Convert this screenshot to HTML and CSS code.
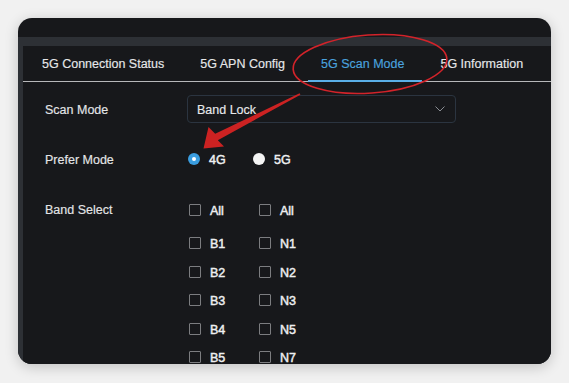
FILE: index.html
```html
<!DOCTYPE html>
<html lang="en">
<head>
<meta charset="utf-8">
<title>5G Scan Mode</title>
<link rel="stylesheet" href="styles.css">
</head>
<body>
<div class="card">
  <div class="frame">
    <div class="panel">
      <nav class="tabs">
        <div class="tab">5G Connection Status</div>
        <div class="tab">5G APN Config</div>
        <div class="tab active">5G Scan Mode</div>
        <div class="tab">5G Information</div>
      </nav>
      <div class="form">
        <div class="row row-select">
          <div class="label">Scan Mode</div>
          <div class="select">
            <span class="txt">Band Lock</span>
            <svg class="chev" width="10" height="6" viewBox="0 0 10 6"><path d="M0.5 0.5 L5 5 L9.5 0.5" fill="none" stroke="#8a8d93" stroke-width="1"/></svg>
          </div>
        </div>
        <div class="row row-radio">
          <div class="label">Prefer Mode</div>
          <div class="radios">
            <div class="opt"><span class="radio checked"></span><span class="opt-text">4G</span></div>
            <div class="opt"><span class="radio"></span><span class="opt-text">5G</span></div>
          </div>
        </div>
        <div class="row row-bands">
          <div class="label label-top">Band Select</div>
          <div class="bands">
            <div class="band-grid band-all">
              <div class="chk"><span class="box"></span><span class="opt-text">All</span></div>
              <div class="chk"><span class="box"></span><span class="opt-text">All</span></div>
            </div>
            <div class="band-grid band-list">
              <div class="chk"><span class="box"></span><span class="opt-text">B1</span></div>
              <div class="chk"><span class="box"></span><span class="opt-text">N1</span></div>
              <div class="chk"><span class="box"></span><span class="opt-text">B2</span></div>
              <div class="chk"><span class="box"></span><span class="opt-text">N2</span></div>
              <div class="chk"><span class="box"></span><span class="opt-text">B3</span></div>
              <div class="chk"><span class="box"></span><span class="opt-text">N3</span></div>
              <div class="chk"><span class="box"></span><span class="opt-text">B4</span></div>
              <div class="chk"><span class="box"></span><span class="opt-text">N5</span></div>
              <div class="chk"><span class="box"></span><span class="opt-text">B5</span></div>
              <div class="chk"><span class="box"></span><span class="opt-text">N7</span></div>
            </div>
          </div>
        </div>
      </div>
    </div>
  </div>
</div>
<svg class="annot" width="569" height="383" viewBox="0 0 569 383">
  <ellipse cx="370" cy="64" rx="77" ry="29" transform="rotate(-4 370 64)" fill="none" stroke="#d2232a" stroke-width="1.6"/>
  <polygon points="299.6,93.3 215.2,133.8 208.5,127 203.5,148.5 224,146.5 217.8,140.2 300.4,94.7" fill="#cc2222"/>
</svg>
</body>
</html>
```
FILE: styles.css
```css
* { box-sizing: border-box; }
html, body { margin: 0; }
body {
  width: 569px;
  height: 383px;
  background: #f1f1f1;
  padding: 18px;
  font-family: "Liberation Sans", Arial, sans-serif;
  font-size: 12.5px;
  color: #e6e7e9;
  position: relative;
  overflow: hidden;
}
.card {
  width: 533px;
  height: 346px;
  border-radius: 14px;
  overflow: hidden;
  background: #17181b;
  padding-top: 19px;
  box-shadow: 0 3px 14px rgba(0,0,0,0.2);
}
.frame {
  height: 100%;
  background: #2d3035;
  padding: 9px 0 0 5px;
}
.panel {
  height: 100%;
  background: #17181b;
  overflow: hidden;
}
.tabs {
  display: flex;
  height: 36px;
  padding-left: 1px;
  border-bottom: 1px solid #b7b8ba;
}
.tab {
  position: relative;
  display: flex;
  align-items: center;
  padding: 0 18px;
  white-space: nowrap;
  color: #e6e7e9;
  -webkit-text-stroke: 0.15px #e6e7e9;
}
.tab.active { color: #4aa2df; -webkit-text-stroke: 0.15px #4aa2df; }
.tab.active::after {
  content: "";
  position: absolute;
  left: 5px;
  right: 0;
  bottom: -1px;
  height: 2px;
  background: #5aafe8;
}
.form {
  padding: 13px 0 0 22px;
}
.row {
  display: flex;
  align-items: center;
}
.label {
  width: 142px;
  flex: none;
  color: #e4e5e7;
  padding-top: 2px;
  -webkit-text-stroke: 0.15px #e4e5e7;
}
.row-select { height: 28px; }
.select {
  width: 269px;
  height: 28px;
  border: 1px solid #2b3440;
  border-radius: 4px;
  display: flex;
  align-items: center;
  justify-content: space-between;
  padding: 0 10px 0 9px;
  color: #e8e9eb;
}
.txt { padding-top: 2px; -webkit-text-stroke: 0.15px #e8e9eb; }
.chev { display: block; }
.row-radio { height: 28px; margin-top: 22px; }
.radios { display: flex; padding-left: 1px; }
.opt {
  width: 65px;
  display: flex;
  align-items: center;
  gap: 9px;
}
.opt-text {
  color: #eeeff1;
  padding-top: 2px;
  -webkit-text-stroke: 0.45px #eeeff1;
}
.radio {
  width: 12px;
  height: 12px;
  border-radius: 50%;
  background: #f4f4f4;
  flex: none;
  display: flex;
  align-items: center;
  justify-content: center;
}
.radio.checked { background: #3a9de0; }
.radio.checked::after {
  content: "";
  width: 4px;
  height: 4px;
  border-radius: 50%;
  background: #ffffff;
}
.row-bands { align-items: flex-start; margin-top: 27px; }
.label-top { line-height: 20px; padding-top: 0; }
.bands { padding-left: 2px; }
.band-grid {
  display: grid;
  grid-template-columns: 70px 70px;
  grid-auto-rows: 20px;
  row-gap: 8.5px;
}
.band-all { margin-bottom: 13px; }
.chk {
  display: flex;
  align-items: center;
  gap: 9px;
}
.box {
  width: 12px;
  height: 12px;
  border: 1px solid #7c7d80;
  border-radius: 1px;
  flex: none;
}
.annot {
  position: absolute;
  left: 0;
  top: 0;
  pointer-events: none;
}
```
